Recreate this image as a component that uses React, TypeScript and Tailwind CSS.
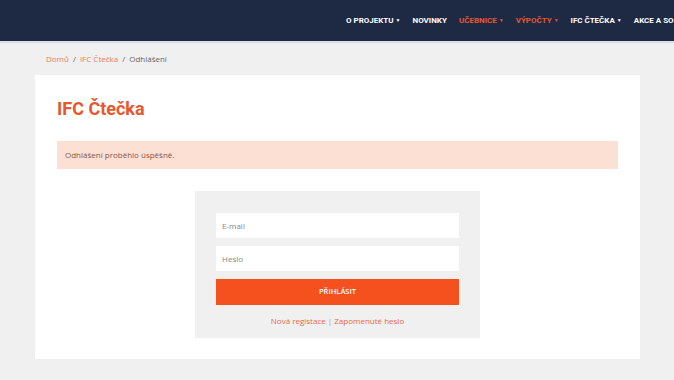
import React from "react";

const navItems: { label: string; caret: boolean; active: boolean }[] = [
  { label: "O PROJEKTU", caret: true, active: false },
  { label: "NOVINKY", caret: false, active: false },
  { label: "UČEBNICE", caret: true, active: true },
  { label: "VÝPOČTY", caret: true, active: true },
  { label: "IFC ČTEČKA", caret: true, active: false },
  { label: "AKCE A SOUTĚŽE", caret: true, active: false },
];

export default function App() {
  return (
    <div className="w-[674px] h-[380px] overflow-hidden bg-[#f0f0f0] font-['Open_Sans',sans-serif]">
      <nav className="h-[43px] bg-[#1e2943] border-b-[2px] border-[#d9deea] flex items-center pl-[346px] gap-[12px] overflow-hidden whitespace-nowrap font-['Roboto',sans-serif] text-[8px] font-bold">
        {navItems.map((it) => (
          <span
            key={it.label}
            className={`flex items-center gap-[2px] shrink-0 ${it.active ? "text-[#e8572e]" : "text-white"}`}
          >
            {it.label}
            {it.caret && <span className="text-[5px] leading-none">▼</span>}
          </span>
        ))}
      </nav>

      <div className="px-[46px] pt-[10px] h-[32px] text-[8px] text-[#666] flex items-start">
        <span className="text-[#ea7a5e]">Domů</span>
        <span className="mx-[4px]">/</span>
        <span className="text-[#ea7a5e]">IFC Čtečka</span>
        <span className="mx-[4px]">/</span>
        <span>Odhlášení</span>
      </div>

      <div className="mx-[35px] w-[605px] h-[284px] bg-white px-[22px] pt-[22px]">
        <h1 className="font-['Roboto',sans-serif] font-bold text-[18px] leading-[24px] text-[#e8572e]">
          IFC Čtečka
        </h1>
        <div className="mt-[20px] h-[28px] bg-[#fde0d4] flex items-center px-[8px] text-[8px] text-[#8a5444]">
          Odhlášení proběhlo úspěšně.
        </div>
        <div className="mt-[22px] mx-auto w-[285px] h-[147px] bg-[#f0f0f0] px-[21px] pt-[22px]">
          <div className="h-[25px] bg-white flex items-center px-[6px] text-[8px] text-[#888]">E-mail</div>
          <div className="mt-[8px] h-[25px] bg-white flex items-center px-[6px] text-[8px] text-[#888]">Heslo</div>
          <div className="mt-[8px] h-[26px] bg-[#f4511e] flex items-center justify-center text-[7.5px] font-semibold text-white">
            PŘIHLÁSIT
          </div>
          <div className="mt-[10px] text-center text-[8px] text-[#e8674a]">
            Nová registace <span className="text-[#999]">|</span> Zapomenuté heslo
          </div>
        </div>
      </div>
    </div>
  );
}
